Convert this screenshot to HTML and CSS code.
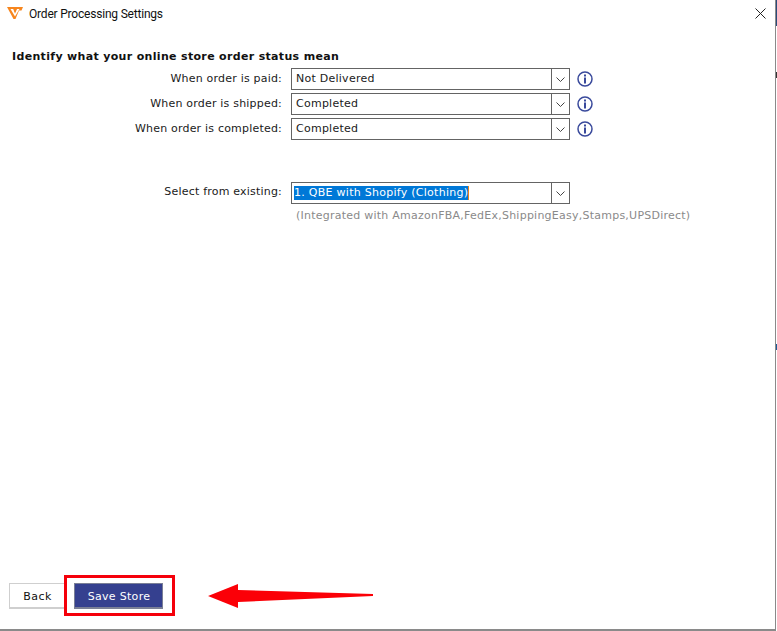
FILE: index.html
```html
<!DOCTYPE html>
<html lang="en">
<head>
    <meta charset="UTF-8">
    <title>Order Processing Settings</title>
    <link rel="stylesheet" href="styles.css">
</head>
<body>
    <div class="window">
        <div class="titlebar">
            <svg class="logo" width="16" height="12" viewBox="0 0 16 12">
                <path d="M0 0h16l-1.500 3.500H12L8.500 12h-2z" fill="#f7861e"/>
                <path d="M3.500 2h2.700L8 6.500 10 2h2.500L8 9.500z" fill="#fff"/>
                <path d="M6.800 2.500h2.600L8 5.500z" fill="#f7861e"/>
            </svg>
            <span class="title">Order Processing Settings</span>
            <svg class="close" width="11" height="11" viewBox="0 0 11 11">
                <path d="M.5 .5l10 10M10.500 .5l-10 10" stroke="#222" fill="none"/>
            </svg>
        </div>

        <div class="content">
            <h2>Identify what your online store order status mean</h2>
            <div class="form">
                <label>When order is paid:</label>
                <div class="select"><span class="value">Not Delivered</span><span class="arrow"><svg width="9" height="5" viewBox="0 0 9 5"><path d="M.5 .5l4 4 4-4" stroke="#444" fill="none"/></svg></span></div>
                <svg class="info" width="16" height="16" viewBox="0 0 16 16"><circle cx="8" cy="8" r="7" stroke="#3a4a9c" stroke-width="1.500" fill="#fff"/><rect x="7" y="3.500" width="2" height="2" fill="#3a4a9c"/><rect x="7" y="6.500" width="2" height="6" fill="#3a4a9c"/></svg>

                <label>When order is shipped:</label>
                <div class="select"><span class="value">Completed</span><span class="arrow"><svg width="9" height="5" viewBox="0 0 9 5"><path d="M.5 .5l4 4 4-4" stroke="#444" fill="none"/></svg></span></div>
                <svg class="info" width="16" height="16" viewBox="0 0 16 16"><circle cx="8" cy="8" r="7" stroke="#3a4a9c" stroke-width="1.500" fill="#fff"/><rect x="7" y="3.500" width="2" height="2" fill="#3a4a9c"/><rect x="7" y="6.500" width="2" height="6" fill="#3a4a9c"/></svg>

                <label>When order is completed:</label>
                <div class="select"><span class="value">Completed</span><span class="arrow"><svg width="9" height="5" viewBox="0 0 9 5"><path d="M.5 .5l4 4 4-4" stroke="#444" fill="none"/></svg></span></div>
                <svg class="info" width="16" height="16" viewBox="0 0 16 16"><circle cx="8" cy="8" r="7" stroke="#3a4a9c" stroke-width="1.500" fill="#fff"/><rect x="7" y="3.500" width="2" height="2" fill="#3a4a9c"/><rect x="7" y="6.500" width="2" height="6" fill="#3a4a9c"/></svg>

                <label class="existing">Select from existing:</label>
                <div class="select existing"><span class="value"><span class="selected">1. QBE with Shopify (Clothing)</span></span><span class="arrow"><svg width="9" height="5" viewBox="0 0 9 5"><path d="M.5 .5l4 4 4-4" stroke="#444" fill="none"/></svg></span></div>
                <div class="hint">(Integrated with AmazonFBA,FedEx,ShippingEasy,Stamps,UPSDirect)</div>
            </div>
        </div>

        <div class="footer">
            <button class="btn">Back</button>
            <div class="highlight">
                <button class="btn primary">Save Store</button>
            </div>
            <svg class="pointer" width="166" height="26" viewBox="0 0 166 26">
                <path d="M0 13L30 1v6l135 4v2L30 19v6z" fill="#fb0007"/>
            </svg>
        </div>
    </div>
    <div class="edge"></div>
</body>
</html>
```

FILE: styles.css
```css
html, body {
    height: 100%;
}
body {
    margin: 0;
    display: flex;
    background-color: #ffffff;
    font-family: "DejaVu Sans", Verdana, sans-serif;
    font-size: 11px;
    color: #1a1a1a;
    overflow: hidden;
}
.window {
    width: 775px;
    height: 629px;
    background-color: #ffffff;
    border-right: 1px solid #8a8a8a;
    border-bottom: 2px solid #8a8a8a;
    display: flex;
    flex-direction: column;
}
.edge {
    width: 1px;
    height: 631px;
    background: linear-gradient(#2a4a7a 0, #2a4a7a 26px, #ffffff 26px, #ffffff 72px, #333 72px, #333 78px, #ffffff 78px, #ffffff 344px, #1c5a96 344px, #1c5a96 350px, #ffffff 350px);
}
.titlebar {
    display: flex;
    align-items: center;
    height: 26px;
    padding: 0 9px 0 7px;
}
.logo {
    margin-right: 6px;
}
.title {
    font-family: "Roboto", "Noto Sans", sans-serif;
    font-size: 12px;
    line-height: 14px;
    padding-top: 2px;
    letter-spacing: -.2px;
    color: #111;
    flex: 1;
}
.content {
    flex: 1;
    padding: 24px 0 0 12px;
}
h2 {
    margin: 0;
    font-size: 11px;
    line-height: 14px;
    font-weight: bold;
    color: #111;
    letter-spacing: .33px;
}
.form {
    display: grid;
    grid-template-columns: 270px 279px 16px;
    grid-template-rows: 22px 22px 22px 36px 22px 16px;
    column-gap: 9px;
    row-gap: 3px;
    align-items: center;
    margin-top: 4px;
    justify-content: start;
}
.form .info {
    margin-left: -2px;
}
label {
    text-align: right;
    letter-spacing: .2px;
    padding-bottom: 2px;
}
label.existing {
    grid-row: 5;
    grid-column: 1;
    padding-bottom: 3px;
}
.select {
    height: 22px;
    box-sizing: border-box;
    border: 1px solid #646464;
    display: flex;
    align-items: center;
    background-color: #fff;
}
.select.existing {
    grid-row: 5;
    grid-column: 2;
}
.value {
    flex: 1;
    padding-left: 4px;
    padding-bottom: 2px;
    letter-spacing: .25px;
}
.select.existing .value {
    padding-left: 2px;
    padding-bottom: 0;
    letter-spacing: .27px;
}
.selected {
    display: inline-block;
    background-color: #0078d7;
    color: #fff;
    line-height: 14px;
    border-right: 1px solid #e8811a;
}
.arrow {
    width: 17px;
    height: 100%;
    border-left: 1px solid #646464;
    display: flex;
    align-items: center;
    justify-content: center;
}
.hint {
    grid-row: 6;
    grid-column: 2 / 4;
    white-space: nowrap;
    padding-left: 5px;
    margin-right: -200px;
    color: #8a8a8a;
    letter-spacing: .24px;
}
.footer {
    display: flex;
    align-items: center;
    height: 41px;
    margin-bottom: 13px;
    padding-left: 9px;
}
.btn {
    font: inherit;
    height: 26px;
    cursor: pointer;
    padding: 2px 0 0 1px;
}
.footer > .btn {
    width: 56px;
    background-color: #fff;
    border: 1px solid #cfcfcf;
    border-bottom-width: 2px;
    color: #111;
    letter-spacing: .5px;
}
.highlight {
    box-sizing: border-box;
    width: 111px;
    height: 41px;
    margin-left: -1px;
    border: 3px solid #f5000a;
    display: flex;
    align-items: center;
    padding-left: 7px;
}
.btn.primary {
    width: 89px;
    background-color: #35408f;
    border: 1px solid #7a7f96;
    border-bottom-width: 2px;
    color: #fff;
    letter-spacing: .3px;
}
.pointer {
    margin-left: 33px;
}
```
